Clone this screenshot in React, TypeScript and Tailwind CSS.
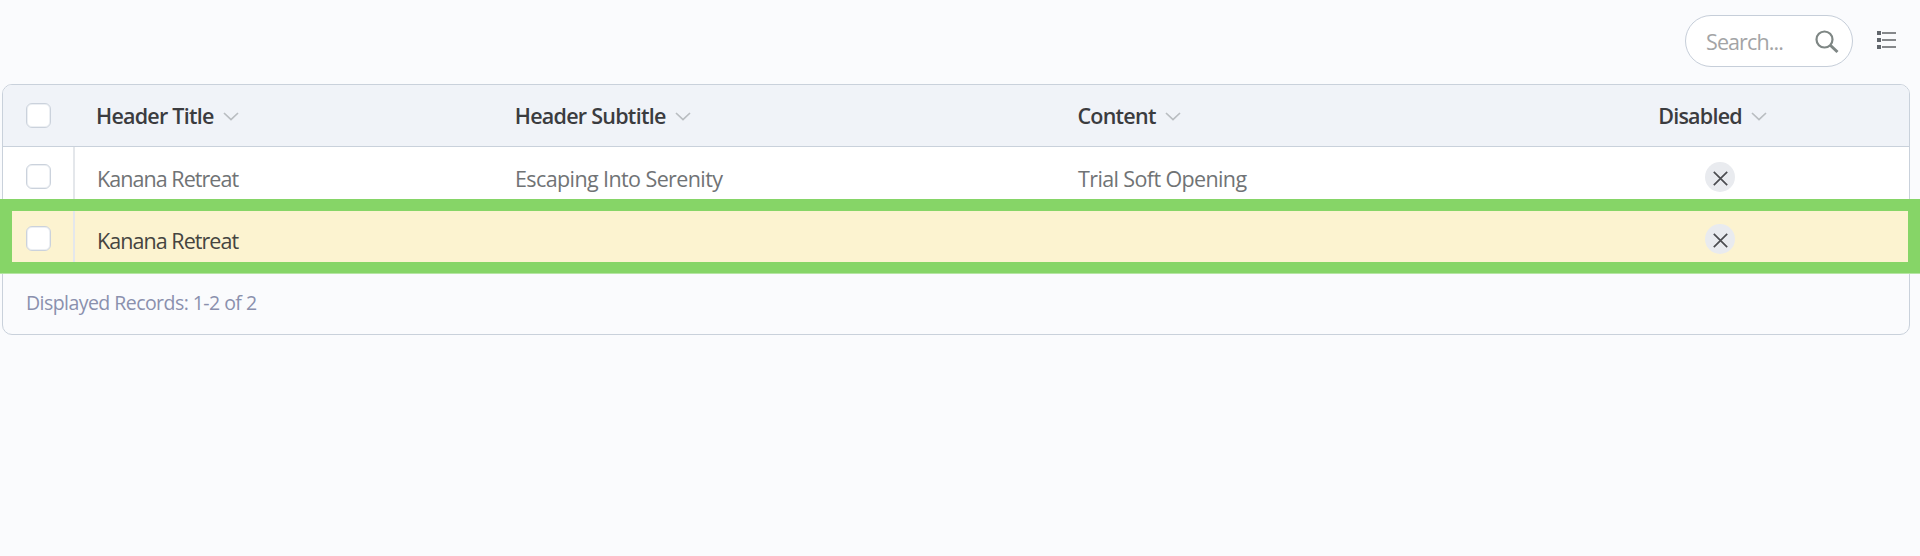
type Column = { title: string; className: string; tracking: string };

const columns: Column[] = [
  { title: 'Header Title', className: 'w-[419px]', tracking: 'tracking-[-0.75px]' },
  { title: 'Header Subtitle', className: 'w-[563px]', tracking: 'tracking-[-0.74px]' },
  { title: 'Content', className: 'w-[581px]', tracking: 'tracking-[-0.75px]' },
  { title: 'Disabled', className: 'w-[251px]', tracking: 'tracking-[-0.75px]' },
];

function Chevron() {
  return (
    <svg className="mt-0.5 h-[9px] w-4" viewBox="0 0 16 9" fill="none" stroke="#b9bdc1" strokeWidth="1.7">
      <path d="M1 1l7 6.5L15 1" />
    </svg>
  );
}

function Checkbox() {
  return (
    <span
      role="checkbox"
      aria-checked="false"
      className="block h-[25px] w-[25px] rounded-[6px] border border-[#cbd2dc] bg-white shadow-[inset_0_0_0_1px_#eceff3]"
    />
  );
}

function DisabledMark() {
  return (
    <span className="flex h-[30px] w-[30px] items-center justify-center rounded-full bg-[#e9ebef]">
      <svg className="mt-0.5 ml-px h-[15px] w-[15px]" viewBox="0 0 15 15" fill="none" stroke="#4c4d51" strokeWidth="1.7">
        <path d="M0.8 0.8l13.4 13.4M14.2 0.8L0.8 14.2" />
      </svg>
    </span>
  );
}

function Row({ title, subtitle, content, highlighted }: { title: string; subtitle?: string; content?: string; highlighted?: boolean }) {
  return (
    <div
      className={
        highlighted
          ? 'flex h-[63px] border-b border-[#d9dde3] bg-[#fcf3d0] text-[#45443f]'
          : 'flex h-[62px] border-b border-[#dfe3e8] bg-white text-[#707375]'
      }
    >
      <div className="w-[72px] border-r-2 border-[#e4e7eb] pt-[17px] pl-[23px]">
        <Checkbox />
      </div>
      <div className="w-[440px] pt-[17px] pl-[22px] tracking-[-0.95px]">{title}</div>
      <div className="w-[563px] pt-[17px] tracking-[-0.6px]">{subtitle}</div>
      <div className="w-[627px] pt-[17px] tracking-[-0.62px]">{content}</div>
      <div className="pt-[15px]">
        <DisabledMark />
      </div>
    </div>
  );
}

export default function App() {
  return (
    <main className="relative h-[556px] w-[1920px] overflow-hidden bg-[#fafbfd] font-['Open_Sans',sans-serif] text-[21.5px] leading-[30px] whitespace-nowrap">
      <div className="flex h-[84px] justify-end pt-[15px]">
        <div className="flex h-[52px] w-[168px] items-center rounded-full border border-[#c6ced9] bg-white pl-5">
          <span className="w-[109px] pt-0.5 tracking-[-0.9px] text-[#a3a4a6]">Search...</span>
          <svg className="mt-px h-6 w-6" viewBox="0 0 24 24" fill="none" stroke="#7e8684">
            <circle cx="9.5" cy="9.5" r="8" strokeWidth="2.2" />
            <path d="M15 15l7.5 7" strokeWidth="3" />
          </svg>
        </div>
        <svg className="mt-[15px] mr-[23px] ml-[23px] h-5 w-[21px]" viewBox="0 0 21 20">
          <path d="M1 1h4v4H1zM1 8h4v4H1zM1 15h4v4H1z" fill="#61666c" />
          <path d="M6 2h14v2H6zM6 9h14v2H6zM6 16h14v2H6z" fill="#85888b" />
        </svg>
      </div>

      <section className="ml-0.5 h-[251px] w-[1908px] overflow-hidden rounded-[10px] border border-[#c9d1db]">
        <header className="flex h-[62px] border-b border-[#c9d1db] bg-[#f0f3f8] font-semibold text-[#3b3c3f]">
          <div className="w-[93px] pt-[18px] pl-[23px]">
            <Checkbox />
          </div>
          {columns.map((c) => (
            <div key={c.title} className={`flex items-center gap-[9px] ${c.className}`}>
              <span className={`pt-px ${c.tracking}`}>{c.title}</span>
              <Chevron />
            </div>
          ))}
        </header>
        <Row title="Kanana Retreat" subtitle="Escaping Into Serenity" content="Trial Soft Opening" />
        <Row title="Kanana Retreat" highlighted />
        <footer className="pt-4 pl-[23px] text-[19.5px] tracking-[-0.55px] text-[#8a90ad]">Displayed Records: 1-2 of 2</footer>
      </section>

      <div className="pointer-events-none absolute top-[199px] left-0 h-[74px] w-[1920px] border-[12px] border-b-[11px] border-[#86d567] shadow-[0_1px_0_#b5e5a3]" />
    </main>
  );
}
